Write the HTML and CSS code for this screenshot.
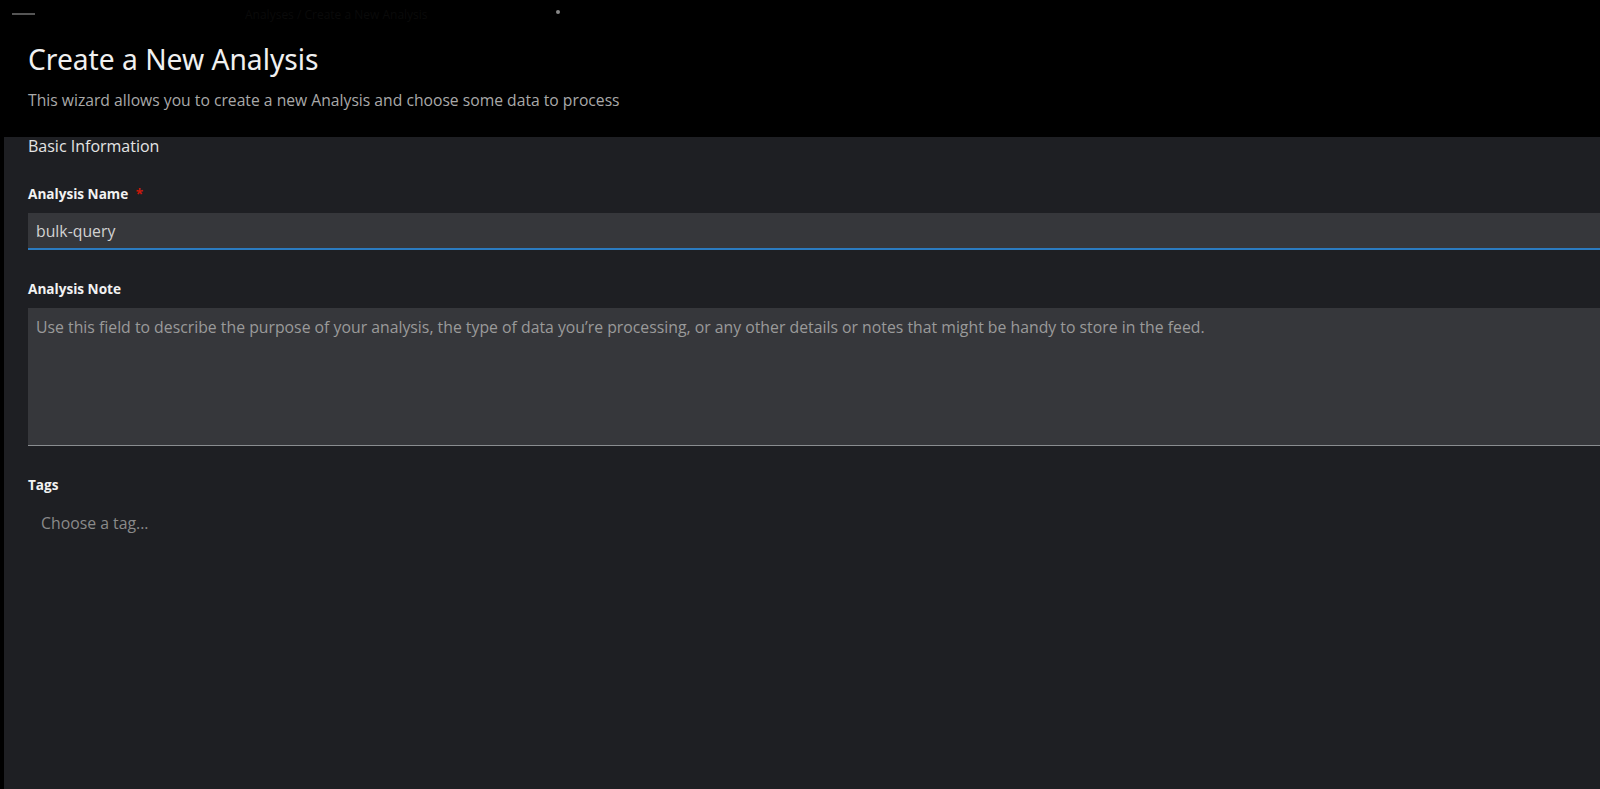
FILE: index.html
```html
<!DOCTYPE html>
<html lang="en">
<head>
  <meta charset="UTF-8">
  <meta name="viewport" content="width=device-width, initial-scale=1.0">
  <title>Create a New Analysis</title>
  <link rel="stylesheet" href="styles.css">
</head>
<body>
  <div class="page">
    <div class="page-header">
      <div class="topbar">
        <span class="topbar-dash"></span>
        <span class="topbar-crumbs">Analyses / Create a New Analysis</span>
        <span class="topbar-kebab"></span>
      </div>
      <h1>Create a New Analysis</h1>
      <p class="subtitle">This wizard allows you to create a new Analysis and choose some data to process</p>
    </div>

    <div class="page-body">
      <div class="section-title">Basic Information</div>

      <div class="form-group">
        <label for="analysis-name">Analysis Name <span class="required">*</span></label>
        <input type="text" id="analysis-name" class="field field-active" value="bulk-query">
      </div>

      <div class="form-group">
        <label for="analysis-note">Analysis Note</label>
        <textarea id="analysis-note" class="field note" placeholder="Use this field to describe the purpose of your analysis, the type of data you’re processing, or any other details or notes that might be handy to store in the feed."></textarea>
      </div>

      <div class="form-group">
        <label>Tags</label>
        <div class="tag-select">Choose a tag...</div>
      </div>
    </div>
  </div>
</body>
</html>
```

FILE: styles.css
```css
html, body {
  margin: 0;
  height: 100%;
  overflow: hidden;
  background: #000;
}
body {
  font-family: "Open Sans", "Noto Sans", sans-serif;
  color: #e0e0e0;
}
.page {
  display: flex;
  flex-direction: column;
  height: 100%;
}
.page-header {
  background: #000;
  padding: 0 28px;
  height: 137px;
  box-sizing: border-box;
}
.topbar {
  display: flex;
  align-items: center;
  height: 28px;
  margin-left: -16px;
}
.topbar-dash {
  width: 23px;
  height: 2px;
  background: #555;
}
.topbar-crumbs {
  margin-left: 210px;
  font-size: 12px;
  color: #0a0a0a;
}
.topbar-kebab {
  width: 4px;
  height: 4px;
  border-radius: 50%;
  background: #888;
  margin-left: 128px;
  margin-top: -5px;
}
h1 {
  margin: 13px 0 0;
  font-family: "Noto Sans", sans-serif;
  font-weight: 400;
  font-size: 28.2px;
  line-height: 36px;
  color: #f0f0f0;
}
.subtitle {
  margin: 12px 0 0;
  font-size: 15.7px;
  color: #a9a9a9;
}
.page-body {
  flex: 1;
  background: #1e1f23;
  margin-left: 4px;
  padding: 0 0 0 24px;
}
.section-title {
  font-size: 16px;
  line-height: 18px;
  color: #e4e4e4;
}
.form-group {
  margin-top: 30px;
}
.form-group label {
  display: block;
  font-weight: 700;
  font-size: 13.6px;
  line-height: 18px;
  color: #f2f2f2;
  margin-bottom: 10px;
}
.required {
  color: #c9190b;
  margin-left: 4px;
}
.field {
  display: block;
  width: 100%;
  box-sizing: border-box;
  background: #36373b;
  border: none;
  border-bottom: 1px solid #8a8d90;
  color: #d2d2d2;
  font-family: inherit;
  font-size: 15.8px;
  padding: 6px 8px;
  margin: 0;
  outline: none;
}
.field-active {
  height: 37px;
  border-bottom: 2px solid #2b7bc0;
}
.note {
  height: 138px;
  resize: none;
  padding-top: 8px;
}
.note::placeholder {
  color: #9a9a9a;
}
.tag-select {
  font-size: 15.8px;
  color: #8a8a8a;
  padding: 8px 13px;
}
```
